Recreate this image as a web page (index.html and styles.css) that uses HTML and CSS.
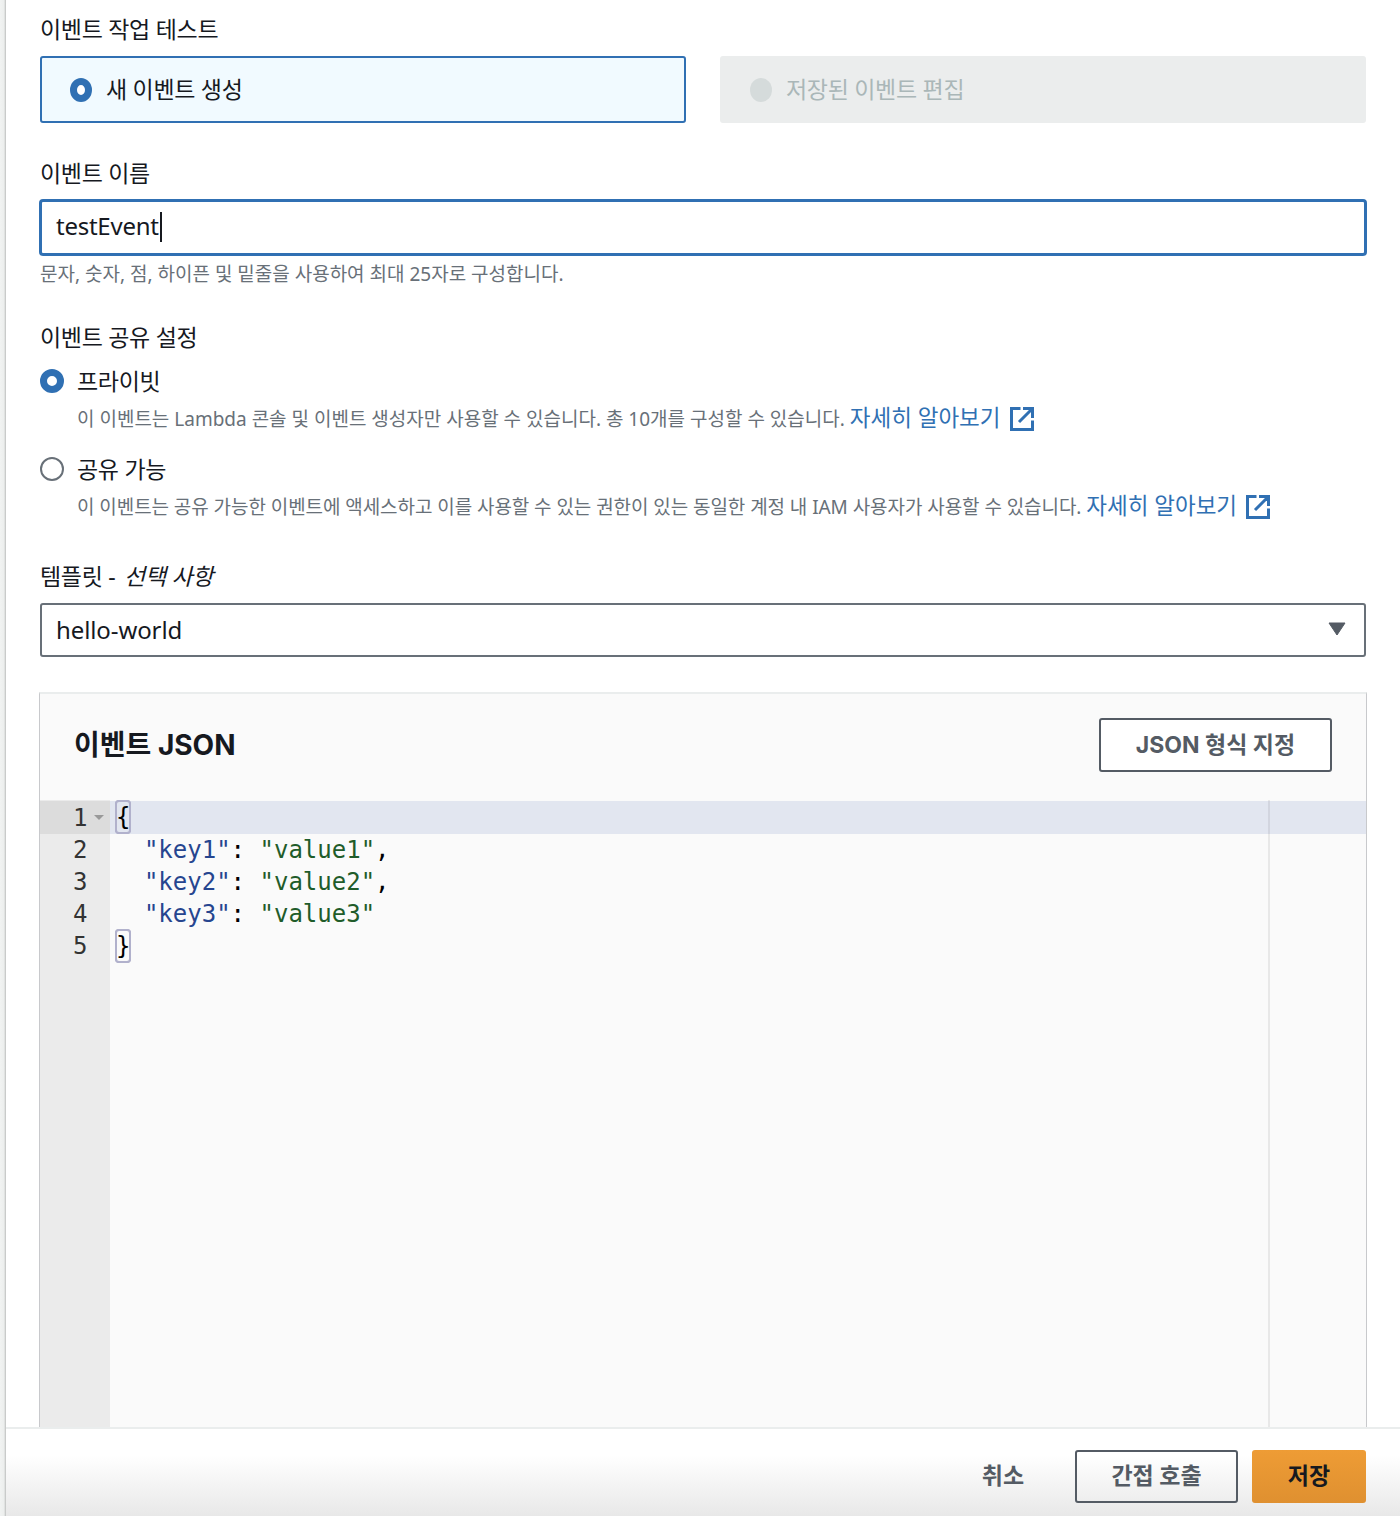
FILE: index.html
```html
<!DOCTYPE html>
<html lang="ko">
<head>
<meta charset="utf-8">
<title>이벤트 작업 테스트</title>
<link rel="stylesheet" href="styles.css">
</head>
<body>
<div class="app">
  <div class="strip"></div>
  <div class="page">
    <main class="form">
      <div class="label first">이벤트 작업 테스트</div>
      <div class="tiles">
        <div class="tile selected"><span class="radio on tile-radio"></span><span>새 이벤트 생성</span></div>
        <div class="tile disabled"><span class="radio dis tile-radio"></span><span>저장된 이벤트 편집</span></div>
      </div>
      <div class="label name-label">이벤트 이름</div>
      <div class="input">testEvent<span class="caret"></span></div>
      <div class="hint">문자, 숫자, 점, 하이픈 및 밑줄을 사용하여 최대 25자로 구성합니다.</div>
      <div class="label share-label">이벤트 공유 설정</div>
      <div class="opt opt-one"><span class="radio on"></span><span>프라이빗</span></div>
      <div class="desc">이 이벤트는 Lambda 콘솔 및 이벤트 생성자만 사용할 수 있습니다. 총 10개를 구성할 수 있습니다. <a class="link">자세히 알아보기<svg class="ext" viewBox="0 0 24 24"><path d="M10.5 1.5H1.5V22.5H22.5V13.5M13 1.5H22.5V11M22.5 1.5L9 15"/></svg></a></div>
      <div class="opt opt-two"><span class="radio off"></span><span>공유 가능</span></div>
      <div class="desc desc-long">이 이벤트는 공유 가능한 이벤트에 액세스하고 이를 사용할 수 있는 권한이 있는 동일한 계정 내 IAM 사용자가 사용할 수 있습니다. <a class="link">자세히 알아보기<svg class="ext" viewBox="0 0 24 24"><path d="M10.5 1.5H1.5V22.5H22.5V13.5M13 1.5H22.5V11M22.5 1.5L9 15"/></svg></a></div>
      <div class="label tpl-label">템플릿 - <em>선택 사항</em></div>
      <div class="select"><span>hello-world</span><svg class="sel-caret" viewBox="0 0 18 14"><path d="M1 1H17L9 13Z"/></svg></div>
      <section class="panel">
        <header class="panel-head">
          <h2>이벤트 JSON</h2>
          <button class="btn fmt">JSON 형식 지정</button>
        </header>
        <div class="editor">
          <div class="gutter">
            <div class="num active"><span>1</span><i class="fold"></i></div>
            <div class="num"><span>2</span></div>
            <div class="num"><span>3</span></div>
            <div class="num"><span>4</span></div>
            <div class="num"><span>5</span></div>
          </div>
          <div class="code">
            <div class="margin"></div>
            <div class="line active"><span class="br">{</span></div>
            <div class="line">  <span class="k">"key1"</span>: <span class="s">"value1"</span>,</div>
            <div class="line">  <span class="k">"key2"</span>: <span class="s">"value2"</span>,</div>
            <div class="line">  <span class="k">"key3"</span>: <span class="s">"value3"</span></div>
            <div class="line"><span class="br">}</span></div>
          </div>
        </div>
      </section>
    </main>
    <footer class="foot">
      <button class="plain">취소</button>
      <button class="btn invoke">간접 호출</button>
      <button class="primary">저장</button>
    </footer>
  </div>
</div>
</body>
</html>
```
FILE: styles.css
```css
* { box-sizing: border-box; }
html, body { margin: 0; height: 100%; background: #fff; }
body {
  font-family: "Noto Sans", "Noto Sans CJK KR", sans-serif;
  color: #16191f;
  overflow: hidden;
}
.app { display: flex; height: 1516px; }
.strip {
  width: 6px;
  flex: none;
  background: linear-gradient(to right, #f1f3f2 0, #eceeed 70%, #c9cbca 85%, #c9cbca 100%);
}
.page { flex: 1; min-width: 0; display: flex; flex-direction: column; }
.form {
  flex: 1;
  min-height: 0;
  padding: 13px 34px 0 34px;
  display: flex;
  flex-direction: column;
}
.label { font-size: 23px; line-height: 32px; letter-spacing: -0.3px; }
.label em { font-style: italic; margin-left: 3px; }
.name-label { margin-top: 34px; }
.share-label { margin-top: 34px; }
.tpl-label { margin-top: 38px; }
.tiles { display: grid; grid-template-columns: 1fr 1fr; gap: 34px; margin-top: 11px; }
.tile {
  height: 67px;
  border-radius: 3px;
  display: flex;
  align-items: center;
  gap: 14px;
  padding: 0 0 4px 30px;
  font-size: 23px;
  letter-spacing: -0.3px;
}
.tile .radio { margin-top: 4px; }
.tile.selected { background: #f1faff; border: 2px solid #3070b3; padding-left: 28px; }
.tile.disabled { background: #ebeded; color: #aab7b8; }
.radio { width: 24px; height: 24px; border-radius: 50%; flex: none; display: block; }
.tile-radio { width: 22px; }
.radio.on { background: #fff; border: 7px solid #3070b3; }
.radio.off { background: #fff; border: 2px solid #687078; }
.radio.dis { background: #d5dbdb; }
.input {
  margin: 10px -1px 0;
  height: 57px;
  border: 3px solid #3070b3;
  border-radius: 4px;
  padding: 0 0 4px 14px;
  display: flex;
  align-items: center;
  font-size: 24px;
  letter-spacing: -0.25px;
}
.caret { width: 2px; height: 30px; background: #16191f; margin: 3px 0 0 1px; }
.hint {
  margin-top: 5px;
  font-size: 19px;
  line-height: 26px;
  color: #687078;
}
.opt { display: flex; align-items: center; gap: 13px; font-size: 23px; line-height: 32px; letter-spacing: -0.3px; }
.opt-one { margin-top: 12px; }
.opt-two { margin-top: 19px; }
.desc {
  margin-top: 5px;
  height: 32px;
  padding-left: 37px;
  font-size: 19px;
  line-height: 32px;
  color: #687078;
  white-space: nowrap;
}
.desc-long { letter-spacing: -0.06px; }
.link { color: #3070b3; font-size: 22.5px; letter-spacing: 0; }
.ext {
  width: 24px;
  height: 24px;
  margin-left: 9px;
  vertical-align: -5px;
  fill: none;
  stroke: #3070b3;
  stroke-width: 3;
}
.select {
  margin-top: 11px;
  height: 54px;
  border: 2px solid #687078;
  border-radius: 3px;
  padding: 0 18px 2px 14px;
  display: flex;
  align-items: center;
  justify-content: space-between;
  font-size: 24px;
  letter-spacing: -0.1px;
}
.sel-caret { width: 18px; height: 14px; fill: #545b64; stroke: #545b64; stroke-width: 1; stroke-linejoin: round; }
.panel {
  margin: 35px -1px 0;
  flex: 1;
  min-height: 0;
  display: flex;
  flex-direction: column;
  background: #fafafa;
  border-top: 2px solid #eaeded;
  border-left: 1px solid #c8c9cc;
  border-right: 1px solid #c8c9cc;
}
.panel-head {
  height: 106px;
  flex: none;
  padding: 24px 34px 0 34px;
  display: flex;
  justify-content: space-between;
  align-items: flex-start;
}
.panel-head h2 {
  margin: 0;
  font: 700 28px/54px "Inter", "Noto Sans CJK KR", sans-serif;
}
.btn {
  height: 54px;
  border: 2px solid #545b64;
  border-radius: 3px;
  background: #fff;
  color: #545b64;
  padding: 0 0 5px;
  font: 700 23px "Inter", "Noto Sans CJK KR", sans-serif;
}
.fmt { width: 233px; }
.editor {
  flex: 1;
  min-height: 0;
  display: flex;
  font-family: "DejaVu Sans Mono", monospace;
  font-size: 24px;
  line-height: 32px;
}
.gutter { width: 70px; flex: none; background: #ebebeb; color: #333; padding-top: 1px; }
.num { height: 32px; padding-left: 33px; display: flex; align-items: center; gap: 7px; }
.num.active { background: #dcdcdc; height: 33px; }
.fold {
  width: 0;
  height: 0;
  border-left: 5px solid transparent;
  border-right: 5px solid transparent;
  border-top: 5px solid #999;
}
.code { flex: 1; position: relative; padding-top: 1px; min-width: 0; }
.margin { position: absolute; z-index: 1; top: 0; bottom: 0; left: 1158px; width: 2px; background: rgba(0, 0, 0, 0.07); }
.line { height: 32px; padding-left: 5px; white-space: pre; color: #000; }
.line.active { background: #e2e6f0; height: 33px; }
.br { display: inline-block; height: 32px; margin-left: 1px; outline: 2px solid #b1b1cc; outline-offset: -1px; border-radius: 3px; box-shadow: 0 0 0 1px #b1b1cc; }
.k { color: #26458f; }
.s { color: #1f5c2a; }
.foot {
  height: 89px;
  flex: none;
  border-top: 2px solid #eaeded;
  background: linear-gradient(to bottom, #fff 0, #fff 30%, #e8e8e8 100%);
  padding: 21px 34px 0 0;
  display: flex;
  justify-content: flex-end;
  align-items: flex-start;
  gap: 14px;
}
.foot .btn { height: 53px; background: transparent; }
.invoke { width: 163px; }
.plain {
  border: 0;
  background: none;
  color: #545b64;
  height: 53px;
  width: 86px;
  margin-right: 15px;
  padding: 0 0 6px;
  font: 700 23px "Inter", "Noto Sans CJK KR", sans-serif;
}
.primary {
  width: 114px;
  height: 53px;
  border: 0;
  border-radius: 3px;
  background: linear-gradient(to bottom, #ee9c35, #df9030);
  color: #16191f;
  padding: 0 0 6px;
  font: 700 23px "Inter", "Noto Sans CJK KR", sans-serif;
}
```
